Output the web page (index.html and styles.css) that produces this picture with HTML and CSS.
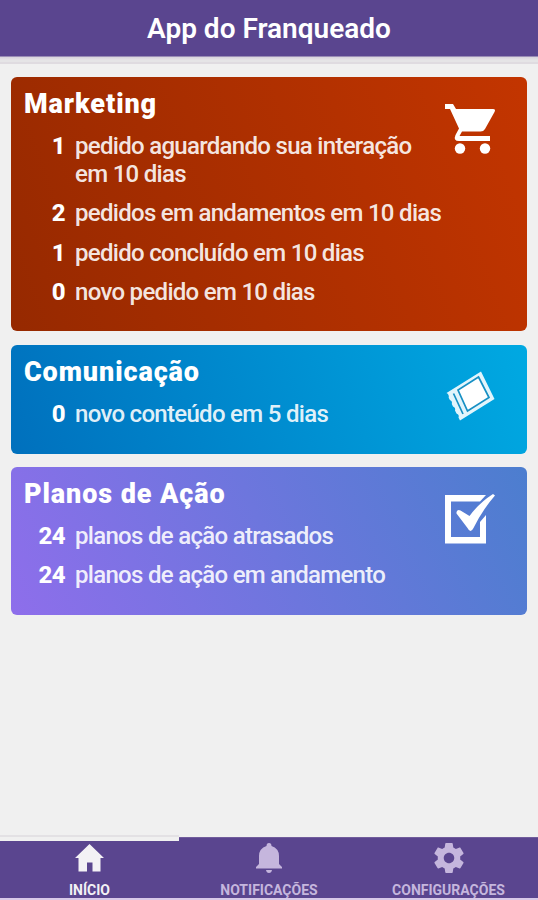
FILE: index.html
```html
<!DOCTYPE html>
<html lang="pt-BR">
<head>
<meta charset="utf-8">
<title>App do Franqueado</title>
<link rel="stylesheet" href="styles.css">
</head>
<body>
<div class="app">
  <header class="topbar"><h1>App do Franqueado</h1></header>
  <main class="content">
    <section class="card marketing">
      <div class="card-body">
        <h2>Marketing</h2>
        <ul>
          <li><b>1</b><span>pedido aguardando sua interação<br>em 10 dias</span></li>
          <li><b>2</b><span>pedidos em andamentos em 10 dias</span></li>
          <li><b>1</b><span>pedido concluído em 10 dias</span></li>
          <li><b>0</b><span>novo pedido em 10 dias</span></li>
        </ul>
      </div>
      <svg class="card-icon" viewBox="0 0 50 50"><path d="M0 0H8L11 5H48Q51 5 49.500 8L40 25Q38.500 27.500 35.500 27.500H17L14.500 32H45V37H14Q8 37 10.500 31L14 24.500L5 5H0Z"/><circle cx="15" cy="44.500" r="5.200"/><circle cx="40" cy="44.500" r="5.200"/></svg>
    </section>
    <section class="card comunicacao">
      <div class="card-body">
        <h2>Comunicação</h2>
        <ul><li><b>0</b><span>novo conteúdo em 5 dias</span></li></ul>
      </div>
      <svg class="card-icon" viewBox="0 0 50 50"><path class="ticket" d="M36 2.500L49.500 30L15 51.500L13.500 48.500Q14.500 45.500 11.500 44.500L10 41.600Q10.800 38.500 8 37.500L6.800 35Q7.600 32 4.900 31L3.700 28.700Q4.400 25.500 1.500 24Z"/><path class="ticket-line" d="M33.500 8L44 28.500L22.500 42L13 21ZM8.500 24.500L18 45"/></svg>
    </section>
    <section class="card planos">
      <div class="card-body">
        <h2>Planos de Ação</h2>
        <ul>
          <li><b>24</b><span>planos de ação atrasados</span></li>
          <li><b>24</b><span>planos de ação em andamento</span></li>
        </ul>
      </div>
      <svg class="card-icon" viewBox="0 0 50 50"><path d="M0 1H41L35 7.500H6V43H35V28L41 21V49.500H0Z"/><path d="M11.500 18Q12.500 15 15.500 16.500L24.500 22Q34 9 48 0L50 1.500Q38 15 28.500 34Q25.500 40 22.500 34L11.500 19.500Z"/></svg>
    </section>
  </main>
  <nav class="tabs">
    <a class="tab active"><svg viewBox="1 0 30 30"><path d="M15.500 0L30 14H26.500V27.500H18.500V18.500H13V27.500H4.500V14H1Z"/></svg><span>INÍCIO</span></a>
    <a class="tab"><svg viewBox="0 0 30 30"><path d="M15 0Q17.500 0 17.500 3Q25 5.500 25 13V21L28 24V25.500H2V24L5 21V13Q5 5.500 12.500 3Q12.500 0 15 0ZM12 27H18Q17.500 30 15 30Q12.500 30 12 27Z"/></svg><span>NOTIFICAÇÕES</span></a>
    <a class="tab"><svg viewBox="2 2 20 20"><path d="M19.430 12.980c.040-.320.070-.640.070-.980s-.030-.660-.070-.980l2.110-1.650c.190-.150.240-.420.120-.640l-2-3.460c-.120-.220-.390-.300-.610-.220l-2.490 1c-.520-.400-1.080-.730-1.690-.980l-.380-2.650C14.460 2.180 14.250 2 14 2h-4c-.250 0-.460.180-.490.420l-.380 2.650c-.610.250-1.170.590-1.690.980l-2.490-1c-.230-.090-.490 0-.610.220l-2 3.460c-.130.220-.070.490.120.640l2.110 1.650c-.040.320-.070.650-.070.980s.030.660.070.980l-2.110 1.650c-.190.150-.240.420-.120.640l2 3.460c.120.220.390.300.610.220l2.490-1c.520.400 1.080.730 1.690.980l.380 2.650c.030.240.240.420.490.420h4c.250 0 .460-.180.490-.420l.380-2.650c.610-.250 1.170-.590 1.690-.980l2.490 1c.230.090.490 0 .610-.220l2-3.460c.120-.220.070-.490-.120-.640l-2.110-1.650zM12 15.500c-1.930 0-3.500-1.570-3.500-3.500s1.570-3.500 3.500-3.500 3.500 1.570 3.500 3.500-1.570 3.500-3.500 3.500z"/></svg><span>CONFIGURAÇÕES</span></a>
  </nav>
</div>
</body>
</html>
```
FILE: styles.css
```css
* { box-sizing: border-box; }
body { margin: 0; background: #f0f0f0; font-family: Roboto, "Liberation Sans", sans-serif; }
.app { height: 900px; display: flex; flex-direction: column; }
.topbar { height: 64px; border-bottom: 2px solid #dfdbe0; background: linear-gradient(#5a458f 56px, #d8d3dc 57px, #e5e4e6 60px); color: #fff; text-align: center; }
h1 { margin: 0; font-size: 28px; font-weight: 600; line-height: 58px; }
.content { flex: 1; padding: 13px 11px 0; display: flex; flex-direction: column; }
.card { display: flex; justify-content: space-between; border-radius: 6px; padding: 12px 32px 0 13px; color: #fff; }
.card-body { min-width: 0; }
.marketing { height: 254px; background: linear-gradient(70deg, #962900, #c33500); }
.comunicacao { height: 109px; margin: 14px 0 13px; background: linear-gradient(70deg, #0070bd, #00a9e2); }
.planos { height: 148px; background: linear-gradient(65deg, #8e6eeb, #4c7ecf); }
h2 { margin: 0; font-size: 27px; line-height: 30px; font-weight: 900; letter-spacing: 0.9px; white-space: nowrap; }
ul { list-style: none; margin: 13px 0 0; padding: 0; display: grid; gap: 11.400px; }
li { display: flex; font-size: 24px; line-height: 28px; gap: 10px; white-space: nowrap; }
li b { width: 41px; text-align: right; font-weight: 800; letter-spacing: -0.6px; }
li span { color: rgba(255, 255, 255, .9); font-weight: 500; letter-spacing: -0.7px; }
.card-icon { width: 50px; height: 50px; flex: none; margin-top: 15px; fill: #fff; overflow: visible; }
.comunicacao .card-icon { margin-top: 12px; }
.ticket { fill: #e2f5fc; }
.ticket-line { fill: #fff; stroke: #1790c4; stroke-width: 1.700; }
.tabs { height: 63px; display: grid; grid-template-columns: 179px 180px 179px; background: #5a458f; border-bottom: 2px solid #d8c9e8; color: #c5b6dd; }
.tab { display: flex; flex-direction: column; align-items: center; padding-top: 5px; border-top: 1px solid #715d9c; }
.tab svg { width: 30px; height: 30px; fill: currentColor; flex: none; }
.tab span { font-size: 14px; line-height: 18px; font-weight: 700; margin-top: 8px; white-space: nowrap; }
.active { color: #f3f1f5; border-top: 4px solid #f0f0f0; padding-top: 3px; box-shadow: 0 -2px 0 #e3e1e4; }
.active span { margin-top: 7px; }
```
